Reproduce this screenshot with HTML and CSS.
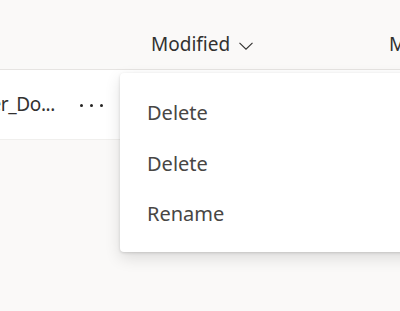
FILE: index.html
```html
<!DOCTYPE html>
<html>
<head>
<meta charset="utf-8">
<link rel="stylesheet" href="styles.css">
</head>
<body>
<div class="page">
  <div class="header">
    <div class="col-name"></div>
    <div class="col-modified">
      <span>Modified</span>
      <svg class="chev" width="14" height="8" viewBox="0 0 14 8"><path d="M0.5 0.8 L7 7.2 L13.5 0.8" fill="none" stroke="#323130" stroke-width="1.1"/></svg>
    </div>
    <div class="col-more">Modified By</div>
  </div>
  <div class="row">
    <div class="cell-name"><span>Quarter_Do...</span></div>
    <div class="cell-dots"><i></i><i></i><i></i></div>
  </div>
</div>
<div class="menu">
  <div class="item">Delete</div>
  <div class="item">Delete</div>
  <div class="item">Rename</div>
</div>
</body>
</html>
```
FILE: styles.css
```css
html, body {
  margin: 0;
  padding: 0;
  background: #faf9f8;
  font-family: "Noto Sans", "Open Sans", sans-serif;
  color: #323130;
  overflow: hidden;
}
.page {
  width: 400px;
  height: 311px;
}
.header {
  height: 70px;
  border-bottom: 1px solid #e6e4e2;
  display: flex;
  align-items: flex-start;
  padding-top: 31px;
  box-sizing: border-box;
  font-size: 19px;
  white-space: nowrap;
  overflow: hidden;
}
.col-name { width: 151px; flex: none; }
.col-modified {
  width: 238px;
  flex: none;
  display: flex;
  align-items: center;
  gap: 9px;
}
.chev { margin-top: 3px; }
.col-more { flex: none; }
.row {
  height: 69px;
  background: #ffffff;
  border-bottom: 1px solid #f0efed;
  display: flex;
  align-items: center;
}
.cell-name {
  width: 55px;
  overflow: hidden;
  display: flex;
  justify-content: flex-end;
  font-size: 19px;
  letter-spacing: -0.4px;
  white-space: nowrap;
  padding-bottom: 1px;
}
.cell-name span { flex: none; }
.cell-dots {
  margin-left: 25px;
  display: flex;
  gap: 6.8px;
  padding-top: 2px;
}
.cell-dots i {
  width: 3px;
  height: 3px;
  border-radius: 50%;
  background: #252423;
}
.menu {
  position: absolute;
  left: 120px;
  top: 73px;
  width: 320px;
  height: 179px;
  box-sizing: border-box;
  padding-top: 14.5px;
  background: #ffffff;
  border-radius: 4px;
  box-shadow: 0 6px 16px rgba(0,0,0,0.12), 0 1px 3px rgba(0,0,0,0.14);
}
.item {
  height: 50.5px;
  display: flex;
  align-items: center;
  padding-left: 27px;
  font-size: 20px;
  color: #484644;
}
```
